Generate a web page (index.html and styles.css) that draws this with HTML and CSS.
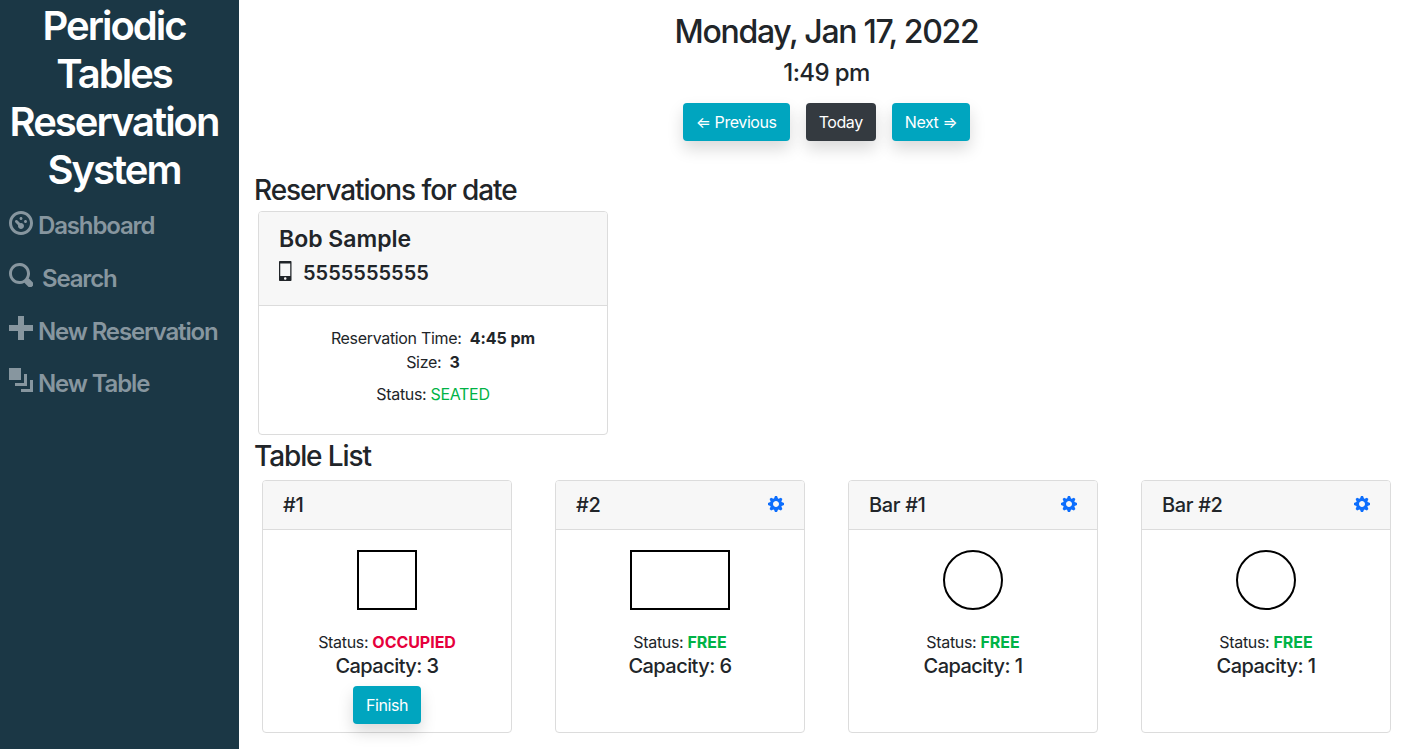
FILE: index.html
```html
<!DOCTYPE html>
<html lang="en">
<head>
<meta charset="utf-8">
<title>Periodic Tables</title>
<link rel="stylesheet" href="styles.css">
</head>
<body>
<div class="app">
  <nav class="sidebar">
    <h1 class="brand">Periodic Tables Reservation System</h1>
    <ul class="nav">
      <li class="nav-item nav-dash">
        <svg class="nav-icon" viewBox="0 0 8 8"><path d="M4 0c-2.200 0-4 1.800-4 4s1.800 4 4 4 4-1.800 4-4-1.800-4-4-4zm0 1c1.660 0 3 1.340 3 3s-1.340 3-3 3-3-1.340-3-3 1.340-3 3-3zm0 1c-.28 0-.5.22-.5.5s.22.5.5.5.5-.22.5-.5-.22-.5-.5-.5zm-1.660 1a.5.5 0 0 0-.19.84l.91.91c-.02.080-.06.16-.06.25 0 .55.45 1 1 1s1-.45 1-1-.45-1-1-1c-.09 0-.17.04-.25.06l-.91-.91a.5.5 0 0 0-.44-.16zm3.160 0c-.28 0-.5.22-.5.5s.22.5.5.5.5-.22.5-.5-.22-.5-.5-.5z"/></svg>
        <span>Dashboard</span>
      </li>
      <li class="nav-item nav-search">
        <svg class="nav-icon" viewBox="0 0 8 8"><path d="M3.500 0c-1.930 0-3.500 1.570-3.500 3.500s1.570 3.500 3.500 3.500c.59 0 1.170-.14 1.660-.41a1 1 0 0 0 .13.13l1 1a1.020 1.020 0 1 0 1.440-1.440l-1-1a1 1 0 0 0-.16-.13c.27-.49.44-1.060.44-1.660 0-1.930-1.570-3.500-3.500-3.500zm0 1c1.390 0 2.500 1.110 2.500 2.500 0 .66-.24 1.270-.66 1.720-.01.01-.02.02-.03.03a1 1 0 0 0-.13.13c-.44.4-1.040.63-1.690.63-1.390 0-2.500-1.110-2.500-2.500s1.110-2.500 2.500-2.500z"/></svg>
        <span>Search</span>
      </li>
      <li class="nav-item">
        <svg class="nav-icon" viewBox="0 0 8 8"><path d="M3 0v3h-3v2h3v3h2v-3h3v-2h-3v-3h-2z"/></svg>
        <span>New Reservation</span>
      </li>
      <li class="nav-item">
        <svg class="nav-icon" viewBox="0 0 8 8"><path d="M0 0v4h4v-4h-4zm5 2v3h-3v1h4v-4h-1zm2 2v3h-3v1h4v-4h-1z"/></svg>
        <span>New Table</span>
      </li>
    </ul>
  </nav>
  <main class="main">
    <header class="date-head">
      <h2 class="date">Monday, Jan 17, 2022</h2>
      <h4 class="time">1:49 pm</h4>
      <div class="btn-row">
        <button class="btn btn-info">⇐ Previous</button>
        <button class="btn btn-dark">Today</button>
        <button class="btn btn-info">Next ⇒</button>
      </div>
    </header>
    <h4 class="section-title">Reservations for date</h4>
    <section class="card res-card">
      <div class="card-header res-header">
        <h5 class="res-name">Bob Sample</h5>
        <h6 class="res-phone">
          <svg class="phone-icon" viewBox="0 0 5 8"><path fill-rule="evenodd" d="M.31 0C.14 0 0 .14 0 .31v7.380c0 .17.14.31.31.31h4.380c.17 0 .31-.14.31-.31V.31C5 .14 4.860 0 4.690 0H.31zM.5 1h4v5h-4V1zm2 5.500c.28 0 .5.22.5.5s-.22.5-.5.5-.5-.22-.5-.5.22-.5.5-.5z"/></svg>
          <span>5555555555</span>
        </h6>
      </div>
      <div class="card-body res-body">
        <p class="line">Reservation Time:&nbsp; <b>4:45 pm</b></p>
        <p class="line">Size:&nbsp; <b>3</b></p>
        <p class="line status-line">Status: <span class="green">SEATED</span></p>
      </div>
    </section>
    <h4 class="section-title table-title">Table List</h4>
    <section class="tables">
      <article class="card table-card">
        <div class="card-header table-header"><span>#1</span></div>
        <div class="card-body table-body">
          <div class="shape square"></div>
          <p class="line status">Status: <b class="red">OCCUPIED</b></p>
          <p class="capacity">Capacity: 3</p>
          <button class="btn btn-info btn-finish">Finish</button>
        </div>
      </article>
      <article class="card table-card">
        <div class="card-header table-header"><span>#2</span>
          <svg class="gear" viewBox="0 0 8 8"><path d="M3.500 0l-.5 1.190c-.1.03-.19.08-.28.13l-1.190-.5-.72.72.5 1.190c-.05.1-.09.18-.13.28l-1.190.5v1l1.190.5c.04.1.08.18.13.28l-.5 1.190.72.72 1.190-.5c.09.04.18.09.28.13l.5 1.190h1l.5-1.190c.09-.04.19-.08.28-.13l1.190.5.72-.72-.5-1.190c.04-.09.09-.19.13-.28l1.190-.5v-1l-1.190-.5c-.03-.09-.08-.19-.13-.28l.5-1.190-.72-.72-1.190.5c-.09-.04-.19-.09-.28-.13l-.5-1.190h-1zm.5 2.500c.83 0 1.500.67 1.500 1.500s-.67 1.500-1.500 1.500-1.500-.67-1.500-1.500.67-1.500 1.500-1.500z"/></svg>
        </div>
        <div class="card-body table-body">
          <div class="shape rect"></div>
          <p class="line status">Status: <b class="green">FREE</b></p>
          <p class="capacity">Capacity: 6</p>
        </div>
      </article>
      <article class="card table-card">
        <div class="card-header table-header"><span>Bar #1</span>
          <svg class="gear" viewBox="0 0 8 8"><path d="M3.500 0l-.5 1.190c-.1.03-.19.08-.28.13l-1.190-.5-.72.72.5 1.190c-.05.1-.09.18-.13.28l-1.190.5v1l1.190.5c.04.1.08.18.13.28l-.5 1.190.72.72 1.190-.5c.09.04.18.09.28.13l.5 1.190h1l.5-1.190c.09-.04.19-.08.28-.13l1.190.5.72-.72-.5-1.190c.04-.09.09-.19.13-.28l1.190-.5v-1l-1.190-.5c-.03-.09-.08-.19-.13-.28l.5-1.190-.72-.72-1.190.5c-.09-.04-.19-.09-.28-.13l-.5-1.190h-1zm.5 2.500c.83 0 1.500.67 1.500 1.500s-.67 1.500-1.500 1.500-1.500-.67-1.500-1.500.67-1.500 1.500-1.500z"/></svg>
        </div>
        <div class="card-body table-body">
          <div class="shape circle"></div>
          <p class="line status">Status: <b class="green">FREE</b></p>
          <p class="capacity">Capacity: 1</p>
        </div>
      </article>
      <article class="card table-card">
        <div class="card-header table-header"><span>Bar #2</span>
          <svg class="gear" viewBox="0 0 8 8"><path d="M3.500 0l-.5 1.190c-.1.03-.19.08-.28.13l-1.190-.5-.72.72.5 1.190c-.05.1-.09.18-.13.28l-1.190.5v1l1.190.5c.04.1.08.18.13.28l-.5 1.190.72.72 1.190-.5c.09.04.18.09.28.13l.5 1.190h1l.5-1.190c.09-.04.19-.08.28-.13l1.190.5.72-.72-.5-1.190c.04-.09.09-.19.13-.28l1.190-.5v-1l-1.190-.5c-.03-.09-.08-.19-.13-.28l.5-1.190-.72-.72-1.190.5c-.09-.04-.19-.09-.28-.13l-.5-1.190h-1zm.5 2.500c.83 0 1.500.67 1.500 1.500s-.67 1.500-1.500 1.500-1.500-.67-1.500-1.500.67-1.500 1.500-1.500z"/></svg>
        </div>
        <div class="card-body table-body">
          <div class="shape circle"></div>
          <p class="line status">Status: <b class="green">FREE</b></p>
          <p class="capacity">Capacity: 1</p>
        </div>
      </article>
    </section>
  </main>
</div>
</body>
</html>
```

FILE: styles.css
```css
* { box-sizing: border-box; }
html, body { margin: 0; height: 100%; overflow: hidden; }
body {
  font-family: Inter, "Liberation Sans", sans-serif;
  font-size: 16px;
  line-height: 1.5;
  color: #212529;
  background: #fff;
}
h1, h2, h4, h5, h6, p { margin: 0; font-weight: 500; }
.app { display: flex; height: 749px; }
.sidebar {
  width: 239px;
  flex: none;
  background: #1b3745;
  padding: 2px 0 0 9px;
}
.brand {
  font-size: 40px;
  line-height: 48px;
  color: #fff;
  text-align: center;
  font-weight: 600;
  letter-spacing: -2px;
  width: 210px;
  margin-bottom: 5.5px;
}
.nav { list-style: none; margin: 0; padding: 0; }
.nav-item {
  display: flex;
  align-items: flex-start;
  gap: 5px;
  height: 52.5px;
  padding-top: 12px;
  font-size: 24px;
  line-height: 29px;
  font-weight: 600;
  letter-spacing: -1.15px;
  color: #87969f;
}
.nav-dash span { margin-top: -1px; }
.nav-search { gap: 9px; }
.nav-icon { width: 24px; height: 24px; fill: currentColor; flex: none; margin-top: -1px; }
.main { flex: 1; min-width: 0; padding: 0 12px 0 15px; }
.date-head { text-align: center; padding-top: 13px; }
.date { font-size: 32px; line-height: 38px; letter-spacing: -1.3px; }
.time { font-size: 24px; line-height: 29px; margin-top: 7px; letter-spacing: -.6px; }
.btn-row { display: flex; justify-content: center; gap: 16px; margin-top: 16px; }
.btn {
  font: inherit;
  letter-spacing: -.42px;
  height: 38px;
  padding: 0 12px;
  border: 1px solid transparent;
  border-radius: 4px;
  color: #fff;
  box-shadow: 0 8px 16px rgba(0,0,0,.15);
}
.btn-info { background: #00a5bf; }
.btn-dark { background: #343a40; }
.section-title { font-size: 28px; line-height: 29px; margin-top: 35px; letter-spacing: -1.1px; }
.table-title { margin-top: 7px; }
.card { border: 1px solid #dcdcdc; border-radius: 4px; background: #fff; }
.card-header { background: #f7f7f7; border-bottom: 1px solid #dcdcdc; border-radius: 3px 3px 0 0; }
.res-card { width: 350px; height: 224px; margin: 6px 0 0 4px; display: flex; flex-direction: column; }
.res-header { height: 94px; padding: 13px 20px 0; }
.res-name { font-size: 23px; line-height: 29px; font-weight: 600; }
.res-phone { display: flex; align-items: center; gap: 11.5px; font-size: 20px; line-height: 24px; font-weight: 600; margin-top: 7px; }
.phone-icon { width: 12.5px; height: 20px; fill: #212529; flex: none; margin-top: -5px; }
.res-body { text-align: center; padding-top: 20px; }
.line { font-weight: 400; font-size: 16px; line-height: 24px; letter-spacing: -.33px; }
.line b { font-weight: 700; letter-spacing: -.05px; }
.status-line { margin-top: 8px; }
.green { color: #00b346; }
.red { color: #e6003c; }
.tables { display: flex; gap: 43px; padding-left: 8px; margin-top: 9px; }
.table-card { width: 250px; height: 253px; }
.table-header {
  height: 49px;
  padding: 0 20px;
  display: flex;
  align-items: center;
  justify-content: space-between;
  font-size: 20px;
  font-weight: 500;
  letter-spacing: -.35px;
}
.gear { width: 16px; height: 16px; fill: #0d6efd; flex: none; margin-top: -2px; }
.table-body { text-align: center; padding-top: 20px; display: flex; flex-direction: column; align-items: center; }
.shape { height: 60px; border: 2px solid #000; margin-bottom: 20px; }
.square { width: 60px; }
.rect { width: 100px; }
.circle { width: 60px; border-radius: 50%; }
.status { line-height: 24px; }
.capacity { font-size: 20px; line-height: 24px; letter-spacing: -.55px; }
.btn-finish { margin-top: 8px; }
```
